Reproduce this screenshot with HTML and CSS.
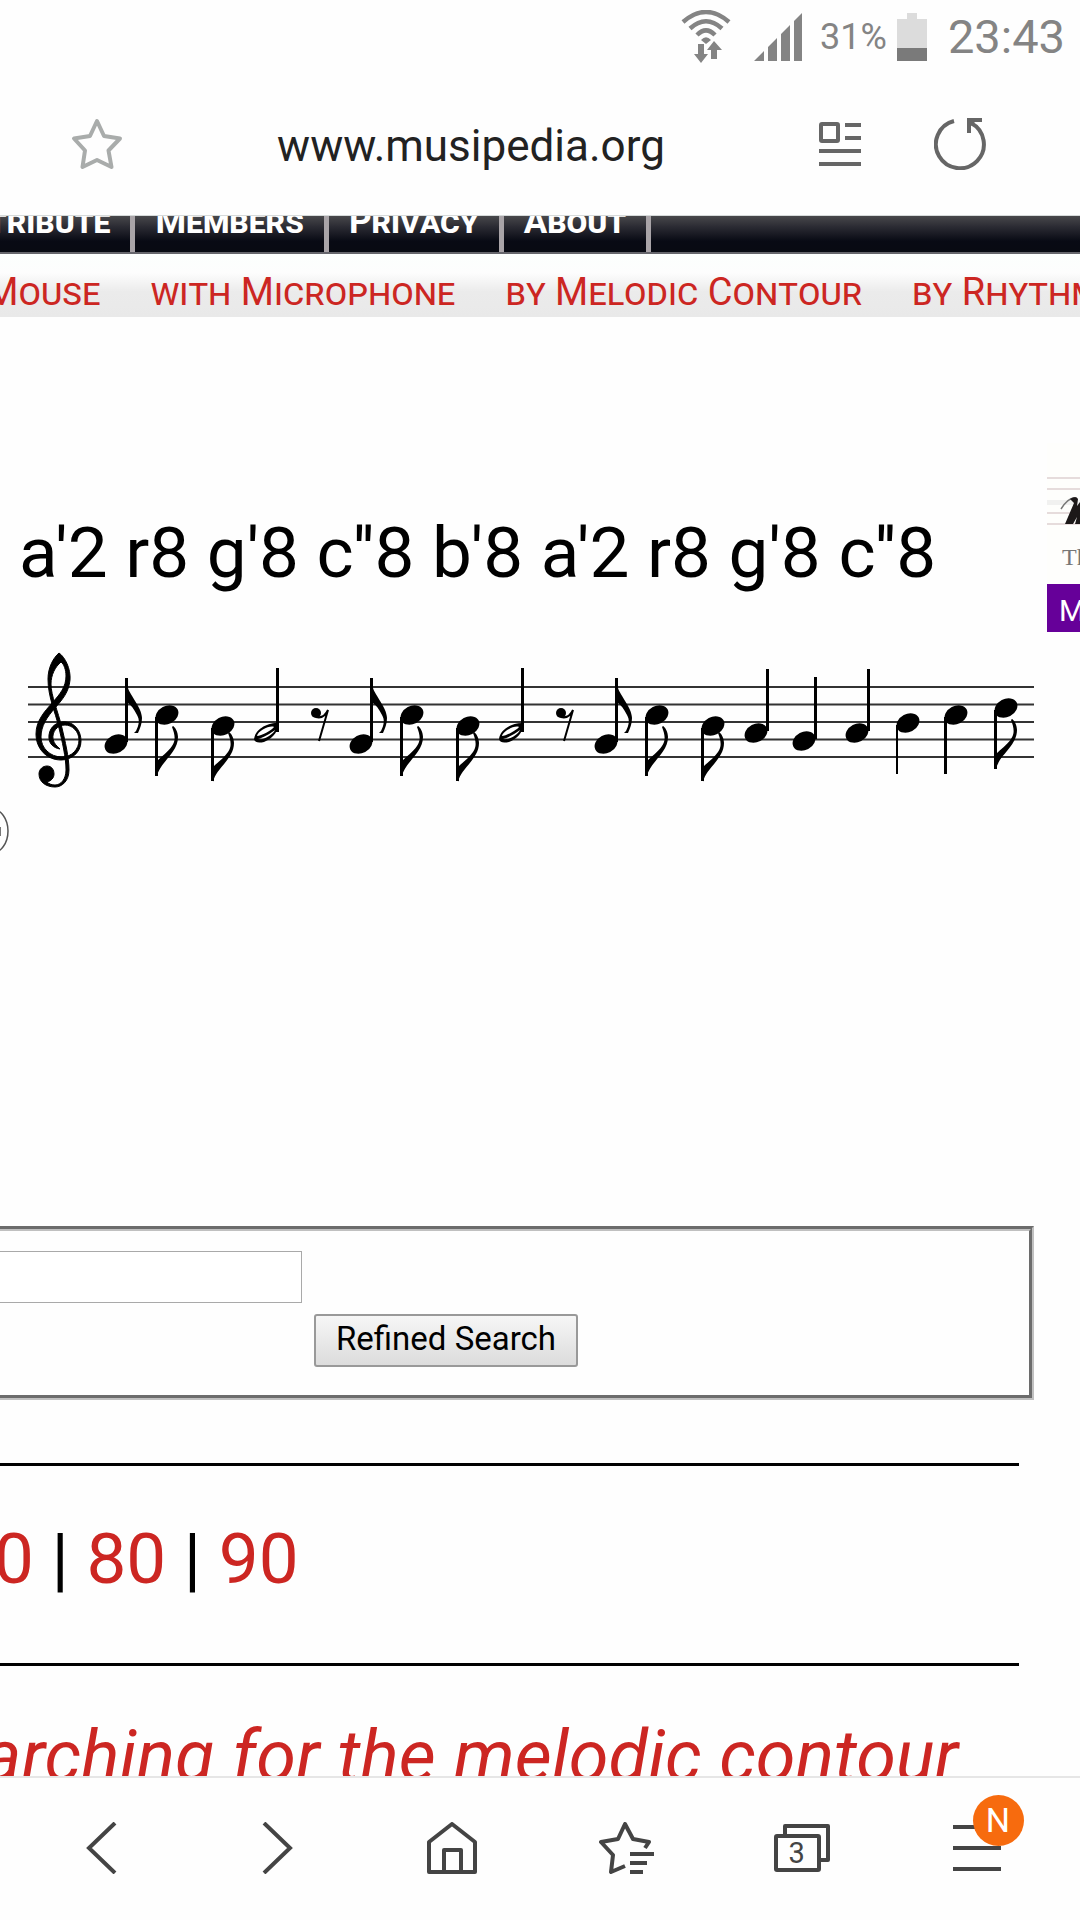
FILE: index.html
```html
<!DOCTYPE html>
<html lang="en">
<head>
    <meta charset="UTF-8">
    <meta name="viewport" content="width=device-width, initial-scale=1.0">
    <title>Musipedia</title>
    <link rel="stylesheet" href="styles.css">
</head>
<body>

<header class="browser-top">
    <div class="status-bar">
        <svg class="wifi" width="50" height="54" viewBox="0 0 50 54" aria-hidden="true">
            <g fill="none" stroke="#848484" stroke-width="4.500">
                <path d="M2 12Q25-8 48 12"/>
                <path d="M9 18.500Q25 4 41 18.500"/>
                <path d="M16 25Q25 16 34 25"/>
            </g>
            <path fill="#848484" d="M20 30Q25 24.500 30 30L25 34z"/>
            <path fill="#848484" d="M17 34h6v10h4l-7 9-7-9h4zM30 49h6V40h5l-8-9-7 9h4z"/>
        </svg>
        <svg class="signal" width="48" height="48" viewBox="0 0 48 48" aria-hidden="true">
            <path fill="#848484" d="M0 48L10 38v10zM14 48V34l9-9v23zM27 48V21l9-9v36zM40 48V8l8-8v48z"/>
        </svg>
        <span class="percent">31%</span>
        <svg class="battery" width="30" height="48" viewBox="0 0 30 48" aria-hidden="true">
            <path fill="#dcdcdc" d="M10 0h10v6h10v29H0V6h10z"/>
            <path fill="#7a7a7a" d="M0 35h30v13H0z"/>
        </svg>
        <span class="clock">23:43</span>
    </div>
    <div class="address-bar">
        <button class="icon" aria-label="Bookmark">
            <svg width="52" height="52" viewBox="0 0 52 52">
                <path fill="none" stroke="#a9acab" stroke-width="4" stroke-linejoin="round" d="M26 3L33 18L49 20.500L37.500 32.500L40.500 49L26 42L11.500 49L14 32.500L3 20.500L19 18z"/>
            </svg>
        </button>
        <span class="url">www.musipedia.org</span>
        <button class="icon" aria-label="Reader view">
            <svg width="42" height="44" viewBox="0 0 42 44">
                <g fill="none" stroke="#666" stroke-width="4">
                    <rect x="2" y="2" width="17" height="17" rx="1"/>
                    <path d="M26 3h16M26 16h16M0 29h42M0 42h42"/>
                </g>
            </svg>
        </button>
        <button class="icon" aria-label="Reload">
            <svg width="52" height="52" viewBox="0 0 52 52">
                <path fill="none" stroke="#666" stroke-width="4" d="M20 3A24 24 0 1 0 37 5"/>
                <path fill="#666" d="M33 0h15v4h-7l-4 4v7h-4z"/>
            </svg>
        </button>
    </div>
</header>

<main>
    <nav class="menu">
        <a href="#">Contribute</a>
        <a href="#">Members</a>
        <a href="#">Privacy</a>
        <a href="#">About</a>
    </nav>
    <nav class="submenu">
        <a href="#">with Mouse</a>
        <a href="#">with Microphone</a>
        <a href="#">by Melodic Contour</a>
        <a href="#">by Rhythm</a>
    </nav>

    <div class="page">
        <div class="content">
            <p class="melody">a'2 r8 g'8 c''8 b'8 a'2 r8 g'8 c''8</p>

            <svg class="score" viewBox="28 640 1006 160" role="img" aria-label="Melody score">
                <defs>
                    <ellipse id="head" rx="12" ry="9" transform="rotate(-28)"/>
                    <path id="flag-down" d="M-10 61C-7 47 11 38 11 22C11 17 8 12 6 11L5 12C8 20 9 25 5 31C1 37-6 42-10 46z"/>
                    <g id="eighth-up">
                        <use href="#head"/>
                        <path d="M9-66h3V-2h-3z"/>
                        <path d="M12-56C14-49 26-36 26-26C26-20 24-16 22-11H18L20-13C23-19 24-24 21-29C18-35 15-39 12-41z"/>
                    </g>
                    <g id="eighth-down">
                        <use href="#head"/>
                        <path d="M-12 2h3V61h-3z"/>
                        <use href="#flag-down"/>
                    </g>
                    <g id="eighth-down-short">
                        <use href="#head"/>
                        <path d="M-12 2h3V55h-3z"/>
                        <use href="#flag-down" y="-5"/>
                    </g>
                    <g id="half">
                        <path fill-rule="evenodd" d="M-12 6C-11-3 0-10 11-10C14-4 8 5-2 9C-7 10-11 10-12 6zM-9 3C-5 3 6-3 8-6C4-8-8-2-9 3zM-8 6C-4 8 7 2 9-3C5 0-3 5-8 6z"/>
                        <path d="M10-65h3V-1h-3z"/>
                    </g>
                    <g id="quarter-up">
                        <use href="#head"/>
                        <path d="M10-64h3V-2h-3z"/>
                    </g>
                    <g id="quarter-down">
                        <use href="#head"/>
                        <path d="M-12 2h2V51h-2z"/>
                    </g>
                    <g id="rest">
                        <circle r="5"/>
                        <path fill="none" stroke="#000" stroke-width="2" d="M0 4Q8 6 12-3L3 28"/>
                    </g>
                </defs>

                <path stroke="#333" stroke-width="2" d="M28 687H1034M28 704.500H1034M28 722H1034M28 739.500H1034M28 757H1034"/>

                <!-- treble clef -->
                <path stroke="#000" stroke-width="1" d="M59 653C65 657 71 669 70 680C69 692 62 700 55 708C47 717 41 726 41 737C41 748 50 757 62 757C72 757 79 749 79 740C79 731 72 725 65 725C57 725 52 732 53 739C54 744 57 746 60 749C54 748 48 744 49 735C50 726 58 721 66 722C75 723 81 731 81 741C81 753 71 760 61 760C47 760 36 749 36 734C36 721 44 712 53 702C60 694 66 687 66 676C66 670 64 664 61 662C55 667 51 675 51 684C51 696 58 711 62 728C65 741 69 757 69 770C69 781 62 787 55 787C46 787 39 782 39 774C39 769 43 766 47 766C52 766 54 770 54 774C54 778 51 781 47 782C49 784 52 785 55 785C61 785 66 779 66 770C66 757 62 741 59 728C55 711 48 697 48 679C48 668 53 658 59 653z"/>

                <use href="#eighth-up" x="116" y="744"/>
                <use href="#eighth-down" x="167" y="715"/>
                <use href="#eighth-down-short" x="223" y="726"/>
                <use href="#half" x="266" y="733"/>
                <use href="#rest" x="316" y="713"/>

                <use href="#eighth-up" x="361" y="744"/>
                <use href="#eighth-down" x="412" y="715"/>
                <use href="#eighth-down-short" x="468" y="726"/>
                <use href="#half" x="511" y="733"/>
                <use href="#rest" x="561" y="713"/>

                <use href="#eighth-up" x="606" y="744"/>
                <use href="#eighth-down" x="657" y="715"/>
                <use href="#eighth-down-short" x="713" y="726"/>
                <use href="#quarter-up" x="756" y="733"/>
                <use href="#quarter-up" x="804" y="741"/>
                <use href="#quarter-up" x="857" y="733"/>
                <use href="#quarter-down" x="908" y="723"/>
                <use href="#quarter-down" x="956" y="715"/>
                <path d="M944 717h3V774h-3z"/>
                <use href="#eighth-down" x="1006" y="708"/>
            </svg>

            <svg class="play" width="10" height="50" viewBox="0 0 10 50" aria-hidden="true">
                <ellipse cx="-8" cy="25" rx="16" ry="22" fill="none" stroke="#555" stroke-width="1.500"/>
                <path fill="#777" d="M0 21h1v9h-1z"/>
            </svg>

            <form class="refine">
                <input type="text" aria-label="Refine search">
                <button type="button">Refined Search</button>
            </form>

            <hr>
            <p class="pager"><a href="#">70</a> | <a href="#">80</a> | <a href="#">90</a></p>
            <hr>
            <p class="results"><a href="#">Searching for the melodic contour</a></p>
        </div>

        <aside class="promo">
            <svg width="33" height="141" viewBox="0 0 33 141" aria-hidden="true">
                <path fill="#fefefc" d="M0 0h33v141H0z"/>
                <path fill="#f1f1f0" d="M0 57h33v5H0z"/>
                <path stroke="#e6dcdc" stroke-width="2" d="M0 35h33M0 46h33M0 70h33M0 81h33"/>
                <path fill="none" stroke="#777" stroke-width="1.500" d="M14 66Q21 55 27 55"/>
                <path fill="#1c1818" d="M23 56Q29 52 31 56L30 63L33 59V81H28L30 74L26 81H18L27 60z"/>
                <text class="caption" x="15" y="122">The</text>
            </svg>
            <a href="#">More</a>
        </aside>
    </div>
</main>

<footer class="browser-bottom">
    <button class="icon" aria-label="Back">
        <svg width="52" height="52" viewBox="0 0 52 52">
            <path d="M39 1L13 26L39 51"/>
        </svg>
    </button>
    <button class="icon" aria-label="Forward">
        <svg width="52" height="52" viewBox="0 0 52 52">
            <path d="M13 1L39 26L13 51"/>
        </svg>
    </button>
    <button class="icon" aria-label="Home">
        <svg width="52" height="52" viewBox="0 0 52 52">
            <path stroke-linejoin="round" d="M3 20L26 2L49 20V50H3z"/>
            <path stroke-linejoin="round" d="M18 50V28H35V50"/>
        </svg>
    </button>
    <button class="icon" aria-label="Bookmarks">
        <svg width="56" height="52" viewBox="0 0 56 52">
            <path stroke-linejoin="round" d="M26 44L12 50L14 33L2 20L19 17L26 2L34 17L50 20L46 26"/>
            <path d="M31 32H55M31 41H48M31 50H44"/>
        </svg>
    </button>
    <button class="icon tabs" aria-label="Tabs">
        <svg width="56" height="50" viewBox="0 0 56 50">
            <path stroke-linejoin="round" d="M11 12V3H54V37H46"/>
            <rect x="2" y="13" width="43" height="34" rx="1"/>
        </svg>
        <span class="count">3</span>
    </button>
    <button class="icon more" aria-label="Menu">
        <svg width="48" height="46" viewBox="0 0 48 46">
            <path d="M0 2H48M0 23H48M0 44H48"/>
        </svg>
        <span class="badge">N</span>
    </button>
</footer>

</body>
</html>
```
FILE: styles.css
```css
* {
    box-sizing: border-box;
}

body {
    font-family: Roboto, "Liberation Sans", sans-serif;
    margin: 0;
    height: 100vh;
    display: flex;
    flex-direction: column;
    overflow: hidden;
    background-color: #fefefe;
    color: #000;
}

a {
    color: #cc2622;
    text-decoration: none;
}

p {
    margin: 0;
}

svg {
    display: block;
}

.icon {
    padding: 0;
    border: none;
    background: none;
    font-family: inherit;
}

/* status bar and address bar */
.status-bar {
    display: flex;
    justify-content: flex-end;
    align-items: center;
    height: 72px;
    padding: 1px 15px 0 0;
    color: #848484;
}

.signal {
    margin-left: 23px;
}

.percent {
    margin-left: 18px;
    font-size: 36px;
}

.battery {
    margin: 0 21px 0 10px;
}

.clock {
    font-size: 47px;
}

.address-bar {
    display: flex;
    align-items: center;
    height: 144px;
    padding: 0 94px 0 71px;
    border-bottom: 1px solid #d6dada;
}

.url {
    flex: 1;
    padding-top: 4px;
    font-size: 44px;
    text-align: center;
    color: #222;
}

.address-bar .icon:last-child {
    margin-left: 73px;
}

/* site menus */
main {
    flex: 1;
    min-height: 0;
    overflow: hidden;
}

.menu,
.submenu {
    display: flex;
    overflow: hidden;
    white-space: nowrap;
    font-variant: small-caps;
}

.menu {
    height: 38px;
    background: linear-gradient(#48484b, #2b2b33 30%, #080a14 70%, #080a12);
    border-bottom: 2px solid #66666c;
}

.menu a {
    padding: 0 20px;
    border-right: 5px solid #a9a4a8;
    line-height: 12px;
    font-size: 35px;
    font-weight: bold;
    color: #fff;
}

.menu a:first-child {
    margin-left: -97px;
}

.submenu {
    height: 63px;
    background: linear-gradient(#fcfffd, #fdfdfd 30%, #ebebeb 60%, #e9e9e9);
}

.submenu a {
    padding: 0 25px;
    line-height: 77px;
    font-size: 38px;
}

.submenu a:first-child {
    margin-left: -130px;
}

/* page content */
.page {
    display: flex;
    align-items: flex-start;
}

.content {
    flex: 1;
    min-width: 0;
    padding: 194px 13px 0 0;
}

.melody,
.pager,
.results {
    line-height: 84px;
    white-space: nowrap;
}

.melody,
.pager {
    font-size: 71px;
}

.melody {
    padding-left: 19px;
}

.score {
    width: calc(100% - 28px);
    margin: 45px 0 6px 28px;
}

.refine {
    display: flex;
    flex-direction: column;
    align-items: flex-start;
    gap: 11px;
    margin: 370px 0 63px -10px;
    padding: 20px 0 28px;
    border: 5px groove #c0c0c0;
}

.refine input {
    width: 307px;
    height: 52px;
    border: 1px solid #a9a9a9;
    background-color: #fff;
}

.refine button {
    height: 53px;
    margin-left: 319px;
    padding: 0 20px 4px;
    border: 2px solid #999;
    border-radius: 3px;
    background: linear-gradient(#f6f6f6, #dcdcdc);
    font-family: inherit;
    font-size: 33px;
    color: #000;
}

hr {
    height: 3px;
    margin: 0 15px 0 0;
    border: none;
    background-color: #000;
}

.pager {
    margin: 51px 0 62px -46px;
}

.results {
    margin: 49px 0 0 -95px;
    font-size: 72px;
    font-style: italic;
}

/* advert on the right */
.promo {
    width: 33px;
    margin-top: 126px;
    overflow: hidden;
}

.promo .caption {
    font-family: "Liberation Serif", serif;
    font-size: 24px;
    fill: #777;
}

.promo a {
    display: block;
    padding-left: 12px;
    line-height: 54px;
    height: 48px;
    font-size: 30px;
    color: #fff;
    background-color: #660099;
}

/* bottom toolbar */
.browser-bottom {
    display: grid;
    grid-template-columns: repeat(6, 1fr);
    justify-items: center;
    align-items: center;
    height: 144px;
    padding: 0 16px 2px 14px;
    border-top: 2px solid #e6e6e6;
}

.browser-bottom .icon {
    position: relative;
}

.browser-bottom svg {
    fill: none;
    stroke: #444;
    stroke-width: 4;
}

.count {
    position: absolute;
    left: 15px;
    top: 13px;
    font-size: 29px;
    line-height: 34px;
    color: #444;
}

.badge {
    position: absolute;
    left: 20px;
    top: -30px;
    width: 51px;
    height: 51px;
    border-radius: 50%;
    background-color: #f76b0e;
    font-size: 34px;
    line-height: 51px;
    color: #fff;
}
```
